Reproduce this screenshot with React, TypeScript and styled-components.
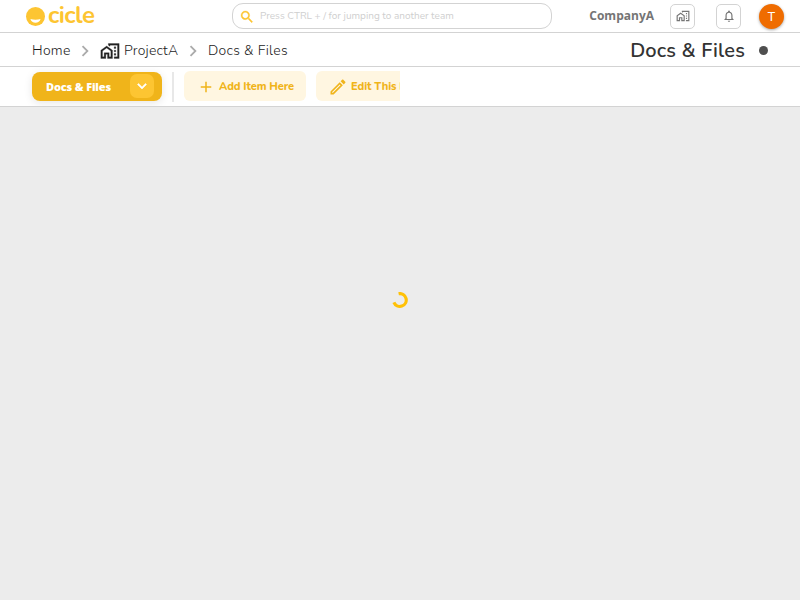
import React from 'react';
import styled, { createGlobalStyle } from 'styled-components';
import {
  MdAdd,
  MdChevronRight,
  MdExpandMore,
  MdNotificationsNone,
  MdOutlineEdit,
  MdOutlineHomeWork,
  MdSearch,
} from 'react-icons/md';

const GlobalStyle = createGlobalStyle`
  *, *::before, *::after { box-sizing: border-box; }
  html, body { margin: 0; }
  body {
    background: #ececec;
    font-family: Nunito, "Open Sans", "Noto Sans", sans-serif;
    color: #333;
  }
  button { font-family: inherit; }
  svg { display: block; flex: none; }
  svg path[fill="none"]:not([stroke]) { stroke: none; }
`;

const Page = styled.div`
  height: 100vh;
  display: flex;
  flex-direction: column;
  overflow: hidden;
`;

const Bar = styled.div<{ $height: number }>`
  height: ${(p) => p.$height}px;
  flex: none;
  display: flex;
  align-items: center;
  background: #fff;
  border-bottom: 1px solid #d3d3d3;
`;

const Label = styled.span<{ $size: number; $weight?: number; $spacing?: number; $color?: string }>`
  font-size: ${(p) => p.$size}px;
  font-weight: ${(p) => p.$weight ?? 400};
  letter-spacing: ${(p) => p.$spacing ?? 0}px;
  color: ${(p) => p.$color ?? 'inherit'};
  line-height: 1.4;
  white-space: nowrap;
`;

const SansLabel = styled(Label)`
  font-family: "Open Sans", sans-serif;
`;

const Logo = styled.div`
  width: 206px;
  flex: none;
  margin-left: 26px;
  display: flex;
  align-items: center;
  gap: 3px;
`;

const SearchBox = styled.div`
  width: 320px;
  height: 26px;
  flex: none;
  display: flex;
  align-items: center;
  gap: 5px;
  padding-left: 6px;
  border: 1px solid #d3d3d3;
  border-radius: 11px;
  color: #fdc532;
`;

const SearchIcon = styled(MdSearch)`
  margin-top: 1px;
  stroke: currentColor;
  stroke-width: 0.5px;
`;

const Account = styled.div`
  flex: 1;
  display: flex;
  align-items: center;
  justify-content: flex-end;
  padding-right: 16px;
`;

const IconButton = styled.button<{ $before: number }>`
  width: 25px;
  height: 25px;
  margin: 0 0 0 ${(p) => p.$before}px;
  padding: 0;
  display: flex;
  align-items: center;
  justify-content: center;
  background: #fff;
  border: 1px solid #d3d3d3;
  border-radius: 5px;
  color: #757575;
`;

const Avatar = styled.div`
  width: 25px;
  height: 25px;
  margin-left: 18px;
  display: flex;
  align-items: center;
  justify-content: center;
  border-radius: 50%;
  background: #ef6c00;
  color: #fff;
  font: 400 13px/1 Roboto, sans-serif;
  box-shadow: 0 1px 3px rgba(0, 0, 0, 0.35);
`;

const Breadcrumbs = styled.nav`
  flex: 1;
  display: flex;
  align-items: center;
  padding: 2px 0 0 32px;
  color: #1c1c1c;
`;

const Crumb = styled.div<{ $width: number }>`
  width: ${(p) => p.$width}px;
  display: flex;
  align-items: center;
  gap: 4px;
`;

const ProjectIcon = styled(MdOutlineHomeWork)`
  width: 20px;
  height: 20px;
  color: #222;
  stroke: currentColor;
  stroke-width: 0.3px;
`;

const Separator = styled(MdChevronRight)<{ $after: number }>`
  width: 22px;
  height: 22px;
  margin-right: ${(p) => p.$after}px;
  color: #ababab;
`;

const Title = styled.h1`
  margin: 2px 32px 0 0;
  display: flex;
  align-items: center;
  gap: 14px;
`;

const Dot = styled.span`
  width: 9px;
  height: 9px;
  margin-bottom: 1px;
  border-radius: 50%;
  background: #4f4f4f;
`;

const Actions = styled.div`
  width: 400px;
  height: 39px;
  display: flex;
  align-items: center;
  padding-left: 32px;
  overflow: hidden;
`;

const PrimaryButton = styled.div`
  width: 130px;
  height: 29px;
  flex: none;
  margin-right: 10px;
  padding: 0 8px 0 14px;
  display: flex;
  align-items: center;
  justify-content: space-between;
  border-radius: 8px;
  background: #f0b41a;
  color: #fff;
  box-shadow: 0 2px 8px rgba(0, 0, 0, 0.1);
`;

const Toggle = styled.button`
  width: 24px;
  height: 24px;
  margin-bottom: 1px;
  padding: 0;
  display: flex;
  align-items: center;
  justify-content: center;
  border: 0;
  border-radius: 7px;
  background: #fdc532;
  color: #fff;
`;

const ToggleIcon = styled(MdExpandMore)`
  stroke: currentColor;
  stroke-width: 0.7px;
`;

const Divider = styled.span`
  width: 2px;
  height: 30px;
  flex: none;
  margin-right: 10px;
  background: #e8e8e8;
`;

const SoftButton = styled.button<{ $width: number; $gap: number; $pad: number }>`
  width: ${(p) => p.$width}px;
  height: 30px;
  flex: none;
  margin: 0 10px 1px 0;
  padding: 1px 0 0 ${(p) => p.$pad}px;
  display: flex;
  align-items: center;
  gap: ${(p) => p.$gap}px;
  border: 0;
  border-radius: 6px;
  background: #fff6e1;
  color: #f0b41a;
`;

const Content = styled.main`
  flex: 1;
  display: flex;
  justify-content: center;
  padding-top: 185px;
`;

function SmileMark() {
  return (
    <svg width="19" height="19" viewBox="0 0 19 19">
      <circle cx="9.5" cy="9.5" r="9.5" fill="#fdc532" />
      <path d="M4.4 11.9q5.1 1.5 10.2 0c-.8 2.5-2.7 3.8-5.1 3.8s-4.3-1.3-5.1-3.8z" fill="#fff" />
    </svg>
  );
}

function Spinner() {
  return (
    <svg width="16" height="16" viewBox="0 0 16 16">
      <path d="M6.6 1.7A6.4 6.4 0 1 1 1.9 10.4" fill="none" stroke="#ffc107" strokeWidth="3.2" />
    </svg>
  );
}

export default function App() {
  return (
    <>
      <GlobalStyle />
      <Page>
        <Bar as="header" $height={33}>
          <Logo>
            <SmileMark />
            <Label $size={24} $weight={700} $spacing={-0.6} $color="#fdc532">cicle</Label>
          </Logo>
          <SearchBox>
            <SearchIcon size={16} />
            <Label $size={10} $color="#cfcfcf">Press CTRL + / for jumping to another team</Label>
          </SearchBox>
          <Account>
            <SansLabel $size={12} $weight={700} $color="#757575">CompanyA</SansLabel>
            <IconButton $before={16} aria-label="Teams"><MdOutlineHomeWork size={14} /></IconButton>
            <IconButton $before={21} aria-label="Notifications"><MdNotificationsNone size={14} /></IconButton>
            <Avatar>T</Avatar>
          </Account>
        </Bar>
        <Bar $height={34}>
          <Breadcrumbs>
            <Crumb $width={42}><Label $size={14} $weight={300} $spacing={0.3}>Home</Label></Crumb>
            <Separator $after={4} />
            <Crumb $width={82}>
              <ProjectIcon />
              <Label $size={14} $weight={300} $spacing={0.2}>ProjectA</Label>
            </Crumb>
            <Separator $after={4} />
            <Crumb $width={90}><Label $size={14} $weight={300} $spacing={0.3}>Docs &amp; Files</Label></Crumb>
          </Breadcrumbs>
          <Title>
            <Label $size={20} $weight={600} $spacing={0.15}>Docs &amp; Files</Label>
            <Dot />
          </Title>
        </Bar>
        <Bar $height={40}>
          <Actions>
            <PrimaryButton>
              <SansLabel $size={11} $weight={800} $spacing={-0.15}>Docs &amp; Files</SansLabel>
              <Toggle aria-label="Open menu"><ToggleIcon size={18} /></Toggle>
            </PrimaryButton>
            <Divider />
            <SoftButton $width={122} $pad={13} $gap={4}>
              <MdAdd size={18} />
              <Label $size={11} $weight={800} $spacing={-0.1}>Add Item Here</Label>
            </SoftButton>
            <SoftButton $width={130} $pad={12} $gap={3}>
              <MdOutlineEdit size={20} />
              <Label $size={11} $weight={800} $spacing={-0.1}>Edit This Page</Label>
            </SoftButton>
          </Actions>
        </Bar>
        <Content>
          <Spinner />
        </Content>
      </Page>
    </>
  );
}
